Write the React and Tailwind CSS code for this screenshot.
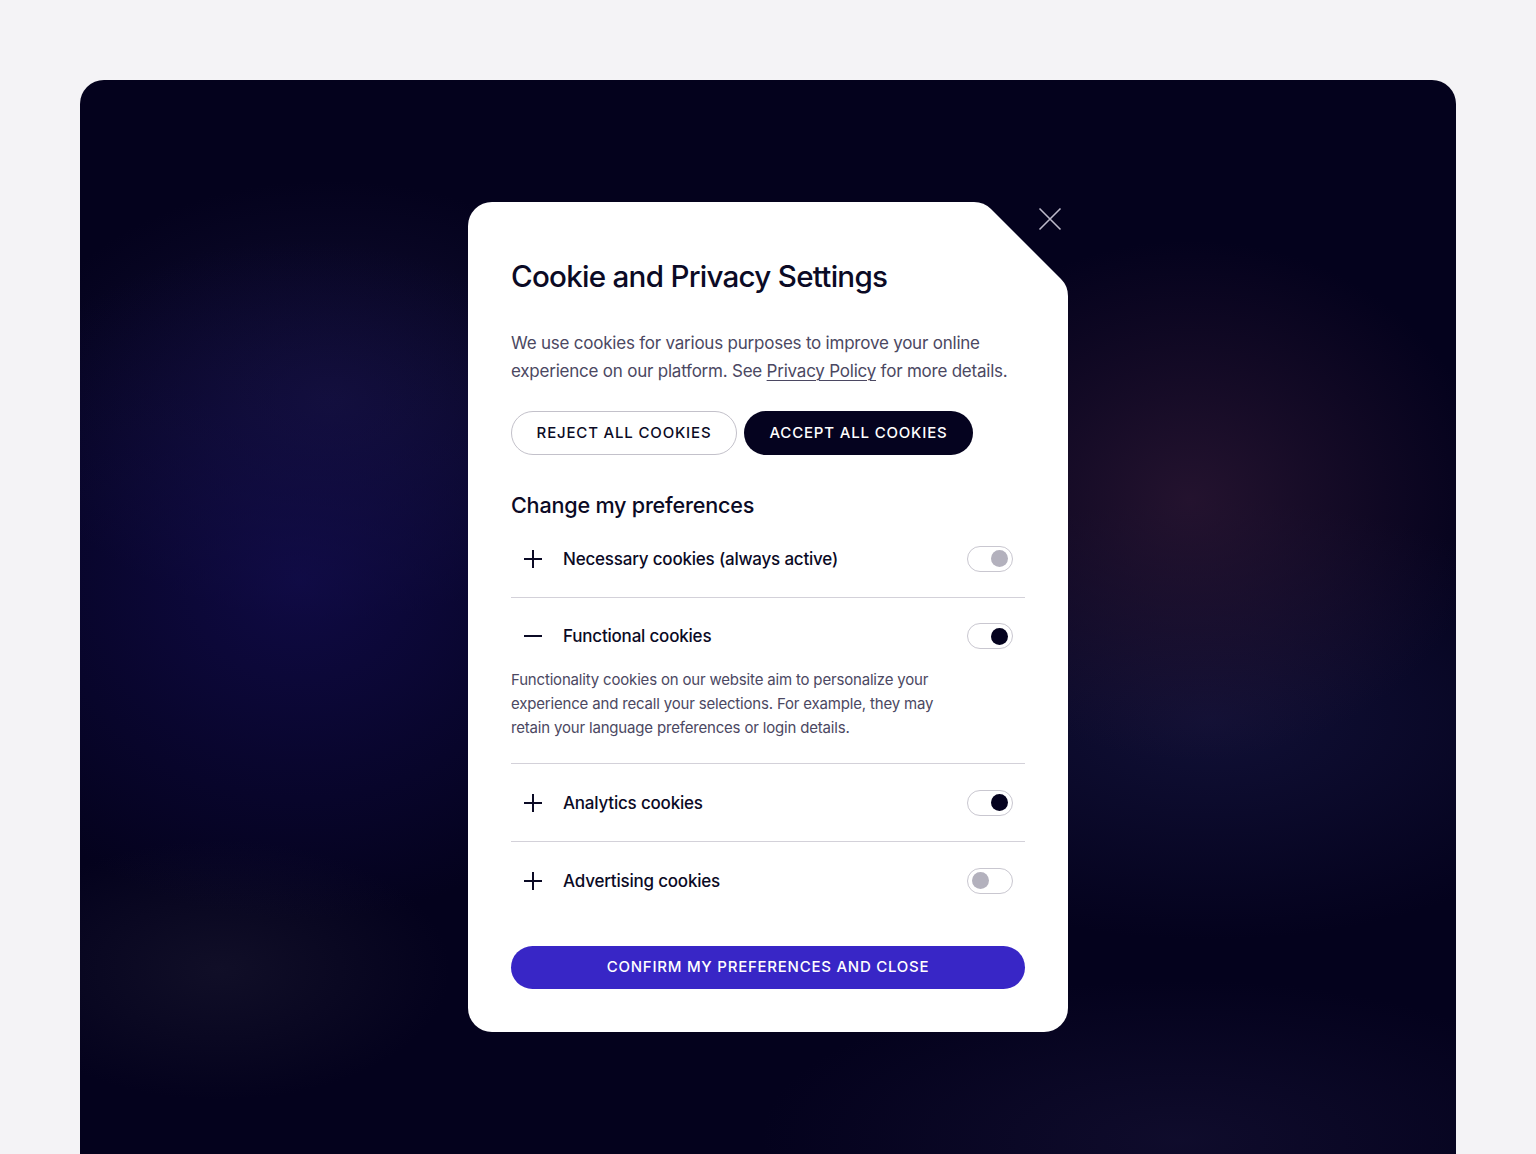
import React, { useState } from "react";

const font = "font-['Inter','Noto_Sans',sans-serif]";

function PlusMinus({ open }) {
  return (
    <svg width="20" height="20" viewBox="0 0 20 20" fill="none" className="shrink-0">
      <path d="M1 10H19" stroke="#0b0a25" strokeWidth="2" />
      {!open && <path d="M10 1V19" stroke="#0b0a25" strokeWidth="2" />}
    </svg>
  );
}

function Toggle({ on, locked }) {
  return (
    <span
      className={
        "flex h-[26px] w-[46px] shrink-0 items-center rounded-full border border-[#c9c7d0] bg-white px-[4px] " +
        (on ? "justify-end" : "justify-start")
      }
    >
      <span
        className={
          "h-[17px] w-[17px] rounded-full " +
          (on && !locked ? "bg-[#05031f]" : "bg-[#b3b1bd]")
        }
      />
    </span>
  );
}

function Row({ title, on, locked, open, desc, last }) {
  return (
    <div className={last ? "" : "border-b border-[#d3d1d9]"}>
      <div
        className={
          "flex items-center " + (open ? "pt-[25px] pb-[19px]" : "h-[77px]")
        }
      >
        <div className="flex w-[52px] justify-start pl-[12px]">
          <PlusMinus open={open} />
        </div>
        <span className="flex-1 text-[17px] font-medium leading-[26px] tracking-[-0.012em] text-[#0b0a25]">
          {title}
        </span>
        <div className="pr-[12px]">
          <Toggle on={on} locked={locked} />
        </div>
      </div>
      {open && (
        <p className="max-w-[440px] pb-[23px] text-[15px] leading-[24px] tracking-[-0.012em] text-[#4b4862]">
          {desc}
        </p>
      )}
    </div>
  );
}

export default function App() {
  const [rows] = useState([
    { title: "Necessary cookies (always active)", on: true, locked: true },
    {
      title: "Functional cookies",
      on: true,
      open: true,
      desc:
        "Functionality cookies on our website aim to personalize your experience and recall your selections. For example, they may retain your language preferences or login details.",
    },
    { title: "Analytics cookies", on: true },
    { title: "Advertising cookies", on: false, locked: true },
  ]);

  return (
    <div className={"h-[1154px] overflow-hidden bg-[#f4f3f6] px-[80px] pt-[80px] " + font}>
      <div className="flex h-[1074px] justify-center rounded-t-[24px] bg-[#04021d] bg-[radial-gradient(ellipse_380px_340px_at_220px_500px,rgba(20,14,84,0.7),transparent),radial-gradient(ellipse_320px_220px_at_250px_320px,rgba(30,26,70,0.55),transparent),radial-gradient(ellipse_300px_260px_at_1110px_420px,rgba(46,24,52,0.75),transparent),radial-gradient(ellipse_420px_220px_at_1130px_640px,rgba(22,22,64,0.7),transparent),radial-gradient(ellipse_230px_130px_at_140px_890px,rgba(22,20,44,0.7),transparent),radial-gradient(ellipse_420px_160px_at_1100px_1060px,rgba(20,16,50,0.7),transparent)] pt-[122px]">
        <div className="relative h-[830px] w-[600px]">
          <div className="h-full w-full bg-white px-[43px] pt-[56px] [clip-path:path('M24,0H506Q516,0,523,7L593,77Q600,84,600,94V806A24,24,0,0,1,576,830H24A24,24,0,0,1,0,806V24A24,24,0,0,1,24,0Z')]">
            <h1 className="text-[29.6px] font-medium leading-[36px] tracking-[-0.025em] text-[#0b0a25]">
              Cookie and Privacy Settings
            </h1>
            <p className="mt-[35px] text-[17px] leading-[28px] tracking-[-0.013em] text-[#4b4862]">
              We use cookies for various purposes to improve your online experience on our platform. See{" "}
              <a href="#" className="underline decoration-1 underline-offset-[3px]">
                Privacy Policy
              </a>{" "}
              for more details.
            </p>
            <div className="mt-[26px] flex gap-[7px]">
              <button className="h-[44px] w-[226px] rounded-full border border-[#c3c1ca] bg-white text-[15px] font-medium tracking-[0.055em] text-[#0b0a25]">
                REJECT ALL COOKIES
              </button>
              <button className="h-[44px] w-[229px] rounded-full bg-[#05031f] text-[15px] font-medium tracking-[0.055em] text-white">
                ACCEPT ALL COOKIES
              </button>
            </div>
            <h2 className="mt-[35px] text-[21.6px] font-medium leading-[30px] tracking-[-0.01em] text-[#0b0a25]">
              Change my preferences
            </h2>
            <div>
              {rows.map((r, i) => (
                <Row key={r.title} {...r} last={i === rows.length - 1} />
              ))}
            </div>
            <button className="mt-[27px] h-[43px] w-full rounded-full bg-[#3826c6] text-[15px] font-medium tracking-[0.05em] text-white">
              CONFIRM MY PREFERENCES AND CLOSE
            </button>
          </div>
          <button
            aria-label="Close"
            className="absolute right-[5px] top-[4px] flex h-[26px] w-[26px] items-center justify-center"
          >
            <svg width="24" height="24" viewBox="0 0 24 24" fill="none">
              <path d="M1.5 1.5L22.5 22.5M22.5 1.5L1.5 22.5" stroke="#bdbaca" strokeWidth="1.6" />
            </svg>
          </button>
        </div>
      </div>
    </div>
  );
}
